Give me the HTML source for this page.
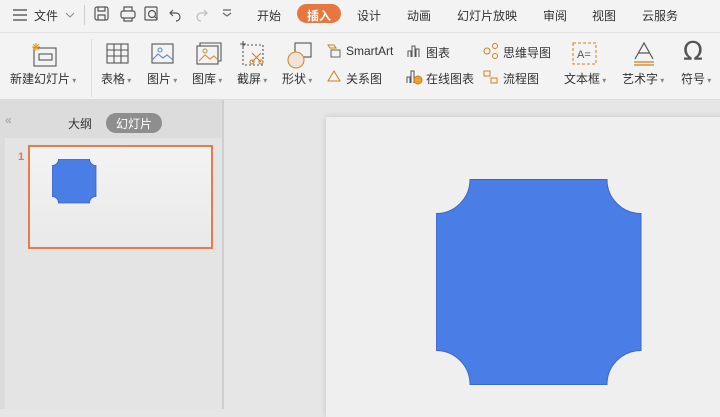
<!DOCTYPE html>
<html><head><meta charset="utf-8">
<style>
*{margin:0;padding:0;box-sizing:border-box}
body{width:720px;height:409px;overflow:hidden;background:#e6e6e6;font-family:"Liberation Sans","Noto Sans CJK SC",sans-serif;color:#333;position:relative}
.top{position:absolute;left:0;top:0;width:720px;height:32px;background:#f3f3f3}
.t{position:absolute;top:7px;font-size:12px;color:#333}
.rib{position:absolute;left:0;top:32px;width:720px;height:68px;background:#f3f3f3;border-top:1px solid #e2e2e2;border-bottom:1px solid #dcdcdc}
.lbl{position:absolute;top:37px;font-size:12px;color:#333;white-space:nowrap}
.sm{position:absolute;font-size:12px;color:#333;white-space:nowrap}
svg{position:absolute}
.left{position:absolute;left:0;top:100px;width:224px;height:309px;background:#dcdcdc;border-right:2px solid #cfcfcf}
.canvas{position:absolute;left:226px;top:100px;width:494px;height:309px;background:#e6e6e6}
.slide{position:absolute;left:326px;top:117px;width:400px;height:300px;background:#efefef;box-shadow:0 0 6px rgba(0,0,0,.15)}
</style></head><body>
<div class="top">
<svg width="16" height="14" style="left:12px;top:8px"><path d="M1 2h14M1 7h14M1 12h14" stroke="#444" stroke-width="1.2"/></svg>
<div class="t" style="left:34px">文件</div>
<svg width="10" height="8" style="left:65px;top:11px"><path d="M1 2l4 4 4-4" stroke="#888" fill="none"/></svg>
<div style="position:absolute;left:84px;top:5px;width:1px;height:20px;background:#ccc"></div>
<svg width="140" height="18" style="left:94px;top:5px" fill="none" stroke="#555" stroke-width="1.2">
<rect x="1" y="2" width="13" height="13" rx="2"/><path d="M4 2v4h7V2M4 15v-5h7v5"/>
<rect x="27" y="6" width="14" height="7" rx="2"/><path d="M30 6V2h8v4M30 13v3h8v-3"/>
<rect x="51" y="2" width="12" height="13" rx="1"/><circle cx="58" cy="9" r="3.5"/><path d="M60.5 11.5l3 3"/>
<path d="M79 5l-3 3 3 3M76 8h6a4 4 0 010 8"/>
<path d="M110 5l3 3-3 3M113 8h-6a4 4 0 000 8" stroke="#bbb"/>
<path d="M129 8l4 3 4-3M129 5h8" stroke="#666"/></svg>
<div class="t" style="left:257px">开始</div>
<div style="position:absolute;left:297px;top:4px;width:44px;height:19px;border-radius:10px;background:#e8763f"></div>
<div class="t" style="left:307px;color:#fff;font-weight:bold">插入</div>
<div class="t" style="left:357px">设计</div>
<div class="t" style="left:407px">动画</div>
<div class="t" style="left:457px">幻灯片放映</div>
<div class="t" style="left:543px">审阅</div>
<div class="t" style="left:592px">视图</div>
<div class="t" style="left:642px">云服务</div>
</div>
<div class="rib">
<svg width="30" height="30" style="left:32px;top:9px" fill="none" stroke="#555" stroke-width="1.1"><rect x="2" y="6" width="22" height="18"/><rect x="7" y="12" width="13" height="6"/><path d="M4 1v8M0 5h8M1 2l6 6M7 2l-6 6" stroke="#e0a020"/></svg>
<div class="lbl" style="left:10px">新建幻灯片<span style="font-size:8px;color:#888"> ▾</span></div>
<div style="position:absolute;left:91px;top:6px;width:1px;height:58px;background:#ddd"></div>
<svg width="24" height="22" style="left:106px;top:10px" fill="none" stroke="#555" stroke-width="1.1"><rect x="1" y="1" width="21" height="19"/><path d="M1 7h21M1 13h21M8 1v19M15 1v19"/></svg>
<div class="lbl" style="left:101px">表格<span style="font-size:8px;color:#888"> ▾</span></div>
<svg width="24" height="22" style="left:151px;top:10px" fill="none" stroke="#555" stroke-width="1.1"><rect x="1" y="1" width="21" height="19"/><path d="M1 17l6-6 5 4 4-3 6 5" stroke="#5b8ad0"/><circle cx="9" cy="7" r="2" stroke="#5b8ad0"/></svg>
<div class="lbl" style="left:147px">图片<span style="font-size:8px;color:#888"> ▾</span></div>
<svg width="26" height="24" style="left:196px;top:9px" fill="none" stroke="#555" stroke-width="1.1"><rect x="1" y="4" width="21" height="18"/><path d="M4 4V1h21v18h-3"/><path d="M3 19l6-6 5 4 4-3 4 4" stroke="#d09040"/><circle cx="9" cy="9" r="2" stroke="#d09040"/></svg>
<div class="lbl" style="left:192px">图库<span style="font-size:8px;color:#888"> ▾</span></div>
<svg width="26" height="26" style="left:240px;top:8px" fill="none" stroke="#555" stroke-width="1.1"><rect x="3" y="4" width="20" height="20" stroke-dasharray="2 2"/><path d="M3 0v6M0 3h6"/><path d="M12 12l9 9M21 12l-9 9" stroke="#d08020"/><circle cx="12" cy="21" r="2" stroke="#d08020"/><circle cx="21" cy="21" r="2" stroke="#d08020"/></svg>
<div class="lbl" style="left:237px">截屏<span style="font-size:8px;color:#888"> ▾</span></div>
<svg width="28" height="28" style="left:285px;top:8px" fill="none" stroke="#555" stroke-width="1.1"><rect x="10" y="2" width="16" height="14"/><circle cx="11" cy="19" r="8" fill="#efe4d6" stroke="#d08a30"/></svg>
<div class="lbl" style="left:282px">形状<span style="font-size:8px;color:#888"> ▾</span></div>
<svg width="16" height="16" style="left:326px;top:10px" fill="none" stroke="#666"><path d="M2 2h6l2 3H4z" stroke="#d08020"/><rect x="5" y="7" width="9" height="7"/></svg>
<div class="sm" style="left:346px;top:11px">SmartArt</div>
<svg width="16" height="16" style="left:326px;top:36px" fill="none" stroke="#d08020"><path d="M8 2l6 10H2z"/></svg>
<div class="sm" style="left:346px;top:37px">关系图</div>
<svg width="16" height="16" style="left:406px;top:10px" fill="none" stroke="#555"><path d="M2 14V8h3v6M6 14V3h3v11M10 14V6h3v8"/></svg>
<div class="sm" style="left:426px;top:11px">图表</div>
<svg width="18" height="18" style="left:405px;top:35px" fill="none" stroke="#555"><path d="M2 15V9h3v6M6 15V3h3v12"/><circle cx="13" cy="12" r="4" fill="#e8a030" stroke="#d08020"/></svg>
<div class="sm" style="left:426px;top:37px">在线图表</div>
<svg width="18" height="16" style="left:482px;top:10px" fill="none" stroke="#d08020"><circle cx="5" cy="8" r="3"/><circle cx="13" cy="3" r="2.5"/><circle cx="13" cy="13" r="2.5"/></svg>
<div class="sm" style="left:503px;top:11px">思维导图</div>
<svg width="18" height="16" style="left:482px;top:36px" fill="none" stroke="#d08020"><path d="M2 2h6v5H2zM9 9h6v5H9z"/></svg>
<div class="sm" style="left:503px;top:37px">流程图</div>
<svg width="26" height="24" style="left:572px;top:9px" fill="none" stroke="#d08020"><rect x="1" y="1" width="23" height="21" stroke-dasharray="3 2"/><text x="5" y="16" font-size="11" fill="#555" stroke="none">A=</text></svg>
<div class="lbl" style="left:564px">文本框<span style="font-size:8px;color:#888"> ▾</span></div>
<svg width="24" height="26" style="left:632px;top:8px" fill="none" stroke="#555" stroke-width="1.2"><path d="M3 18L12 2l9 16M7 12h10"/><path d="M2 21h20M2 24h20" stroke="#d08020"/></svg>
<div class="lbl" style="left:622px">艺术字<span style="font-size:8px;color:#888"> ▾</span></div>
<div style="position:absolute;left:683px;top:4px;font-size:26px;color:#555;font-family:'DejaVu Sans',sans-serif">Ω</div>
<div class="lbl" style="left:681px">符号<span style="font-size:8px;color:#888"> ▾</span></div>
</div>
<div class="left">
<div style="position:absolute;left:5px;top:13px;font-size:12px;color:#999">«</div>
<div style="position:absolute;left:68px;top:15px;font-size:12px">大纲</div>
<div style="position:absolute;left:106px;top:13px;width:56px;height:20px;border-radius:10px;background:#8e8e8e"></div>
<div style="position:absolute;left:116px;top:15px;font-size:12px;color:#fff">幻灯片</div>
<div style="position:absolute;left:5px;top:38px;width:217px;height:271px;background:#e4e4e4"></div>
<div style="position:absolute;left:18px;top:51px;font-size:11px;color:#e8763f;font-weight:bold">1</div>
<div style="position:absolute;left:28px;top:45px;width:185px;height:104px;border:2px solid #ea7a4a;background:linear-gradient(#f3f3f3,#e9e9e9)">
<svg width="46" height="46" style="left:22px;top:12px"><path d="M6.5 0h31a6.5 6.5 0 0 0 6.5 6.5v31a6.5 6.5 0 0 0 -6.5 6.5h-31a6.5 6.5 0 0 0 -6.5 -6.5v-31a6.5 6.5 0 0 0 6.5 -6.5z" fill="#4a7de6" stroke="#3d63b8" stroke-width=".8"/></svg>
</div>
</div>
<div class="canvas"></div>
<div class="slide"></div>
<svg width="206" height="206" style="left:436px;top:179px"><path d="M34 0.5h137a34 34 0 0 0 34 34v137a34 34 0 0 0 -34 34h-137a34 34 0 0 0 -34 -34v-137a34 34 0 0 0 34 -34z" fill="#4a7de6" stroke="#3f68c0" stroke-width="1"/></svg>
</body></html>
